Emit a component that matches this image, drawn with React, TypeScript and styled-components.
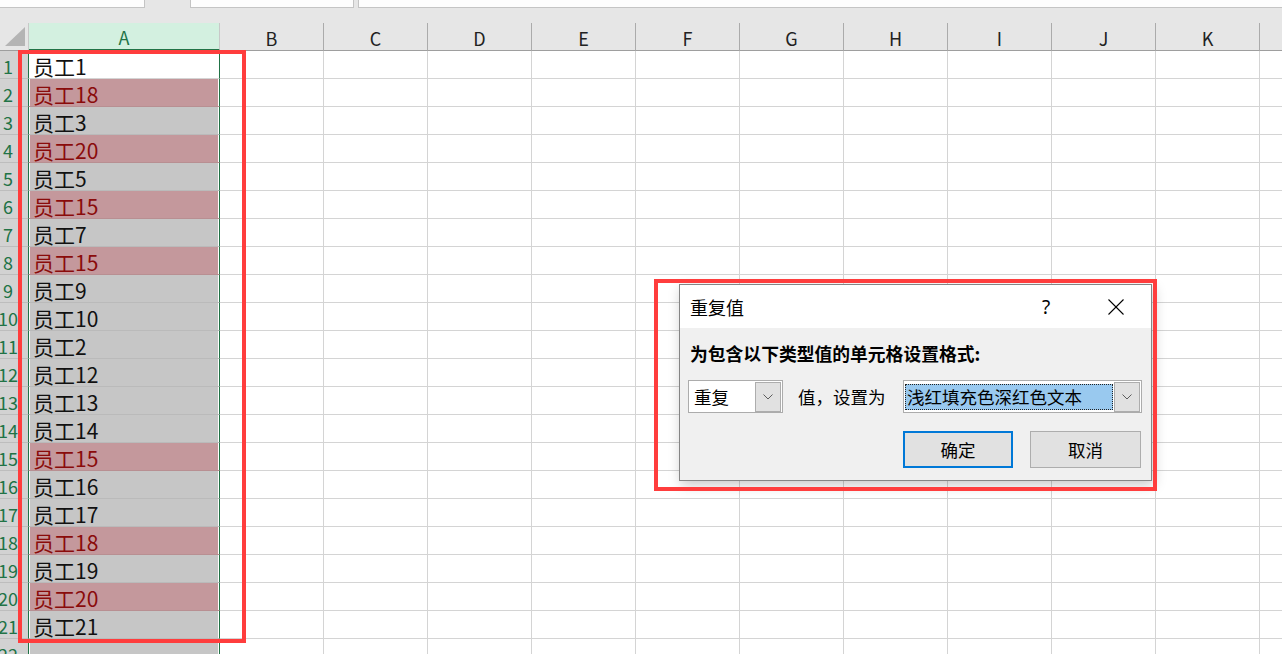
import React from 'react';
import styled, { createGlobalStyle } from 'styled-components';

const GlobalStyle = createGlobalStyle`
  html, body { margin: 0; padding: 0; background: #fff; overflow: hidden; }
  body { font-family: "Noto Sans CJK SC", "Noto Sans", sans-serif; }
  * { box-sizing: border-box; }
`;

const Screen = styled.div`
  position: relative;
  width: 1282px;
  height: 654px;
  overflow: hidden;
  background: #e6e6e6;
  font-family: "Noto Sans CJK SC", "Noto Sans", sans-serif;
`;

const FormulaStrip = styled.div`
  display: flex;
  align-items: flex-start;
  height: 23px;
  background: #e6e6e6;
`;

const StripBox = styled.div<{ $w: number; $ml: number }>`
  flex-shrink: 0;
  width: ${(p) => p.$w}px;
  margin-left: ${(p) => p.$ml}px;
  height: 8px;
  background: #fdfdfd;
  border: 1px solid #c4c4c4;
  border-top: none;
`;

const HeaderRow = styled.div`
  display: flex;
  height: 28px;
  width: max-content;
`;

const Corner = styled.div`
  position: relative;
  flex-shrink: 0;
  width: 29px;
  height: 28px;
  background: #e6e6e6;
  border-right: 1px solid #c8c8c8;
  border-bottom: 1px solid #9e9e9e;
`;

const CornerTriangle = styled.div`
  position: absolute;
  right: 3px;
  bottom: 4px;
  width: 0;
  height: 0;
  border-left: 20px solid transparent;
  border-bottom: 19px solid #b4b4b4;
`;

const ColHeader = styled.div<{ $w: number; $active?: boolean }>`
  flex-shrink: 0;
  width: ${(p) => p.$w}px;
  height: 28px;
  display: flex;
  align-items: center;
  justify-content: center;
  padding-top: 2px;
  font-size: 18px;
  color: ${(p) => (p.$active ? '#217346' : '#222')};
  background: ${(p) => (p.$active ? '#d3f0e0' : '#e6e6e6')};
  border-right: 1px solid ${(p) => (p.$active ? '#c8c8c8' : '#ababab')};
  border-bottom: ${(p) => (p.$active ? '2px solid #217346' : '1px solid #9e9e9e')};
`;

const Row = styled.div`
  display: flex;
  height: 28px;
  width: max-content;
`;

const RowHeader = styled.div`
  flex-shrink: 0;
  width: 28px;
  height: 28px;
  display: flex;
  align-items: center;
  justify-content: center;
  padding-right: 12px;
  padding-top: 2px;
  font-size: 18px;
  color: #217346;
  background: #d2d2d2;
  border-bottom: 1px solid #bdbdbd;
  white-space: nowrap;
  overflow: visible;
`;

type CellKind = 'active' | 'selected' | 'dup';

const CellA = styled.div<{ $kind: CellKind }>`
  flex-shrink: 0;
  width: 192px;
  height: 28px;
  display: flex;
  align-items: center;
  padding-left: 4px;
  padding-top: 2px;
  font-size: 21px;
  white-space: nowrap;
  color: ${(p) => (p.$kind === 'dup' ? '#8a0b0b' : '#111')};
  background: ${(p) =>
    p.$kind === 'active' ? '#ffffff' : p.$kind === 'dup' ? '#c4989c' : '#c6c6c6'};
  border-left: 1px solid #217346;
  border-right: 1px solid #217346;
  border-bottom: 1px solid
    ${(p) => (p.$kind === 'active' ? '#d4d4d4' : 'rgba(0,0,0,0.06)')};
  box-shadow: inset 1px 0 0 #fff, inset -1px 0 0 #fff;
`;

const Cell = styled.div`
  flex-shrink: 0;
  width: 104px;
  height: 28px;
  background: #fff;
  border-right: 1px solid #d4d4d4;
  border-bottom: 1px solid #d4d4d4;
`;

const Annotation = styled.div<{ $l: number; $t: number; $w: number; $h: number }>`
  position: absolute;
  left: ${(p) => p.$l}px;
  top: ${(p) => p.$t}px;
  width: ${(p) => p.$w}px;
  height: ${(p) => p.$h}px;
  border: 4px solid #ff3d3d;
  pointer-events: none;
`;

/* ---------- dialog ---------- */

const Dialog = styled.div`
  position: absolute;
  left: 679px;
  top: 284px;
  width: 473px;
  height: 197px;
  display: flex;
  flex-direction: column;
  background: #f0f0f0;
  border: 1px solid #858585;
  box-shadow: 2px 4px 12px rgba(0, 0, 0, 0.22);
  color: #000;
  font-family: "Noto Sans CJK SC", "Noto Sans", sans-serif;
  font-size: 17.5px;
`;

const TitleBar = styled.div`
  flex-shrink: 0;
  height: 43px;
  display: flex;
  align-items: center;
  padding: 0 12px 0 10px;
  background: #fff;
`;

const Title = styled.span`
  flex: 1;
  font-size: 18px;
`;

const HelpMark = styled.span`
  width: 30px;
  text-align: center;
  font-size: 19px;
  margin-right: 32px;
  font-family: "Noto Sans", "Noto Sans CJK SC", sans-serif;
`;

const CloseButton = styled.div`
  width: 46px;
  height: 30px;
  display: flex;
  align-items: center;
  justify-content: center;
`;

const Body = styled.div`
  flex: 1;
  display: flex;
  flex-direction: column;
  padding: 13px 9px 0 8px;
`;

const Label = styled.div`
  height: 24px;
  line-height: 24px;
  padding-left: 2px;
  font-weight: 700;
  font-size: 17.8px;
  white-space: nowrap;
`;

const ComboRow = styled.div`
  margin-top: 15px;
  height: 33px;
  display: flex;
  align-items: center;
`;

const Combo = styled.div<{ $w: number }>`
  flex-shrink: 0;
  width: ${(p) => p.$w}px;
  height: 33px;
  display: flex;
  align-items: center;
  background: #fff;
  border: 1px solid #acacac;
  padding: 0 1px;
`;

const ComboText = styled.div`
  flex: 1;
  padding-left: 4px;
  white-space: nowrap;
`;

const ComboSelected = styled.div`
  flex: 1;
  height: 26px;
  display: flex;
  align-items: center;
  padding-left: 2px;
  margin-right: 1px;
  background: #99c9ef;
  outline: 1px dotted #222;
  outline-offset: -1px;
  white-space: nowrap;
`;

const DropButton = styled.div`
  flex-shrink: 0;
  width: 26px;
  height: 30px;
  display: flex;
  align-items: center;
  justify-content: center;
  background: #e1e1e1;
  border: 1px solid #adadad;
`;

const InlineText = styled.span`
  margin-left: 15px;
  white-space: nowrap;
`;

const RightCombo = styled(Combo)`
  margin-left: auto;
`;

const ButtonRow = styled.div`
  margin-top: 18px;
  display: flex;
  justify-content: flex-end;
  gap: 17px;
  padding-right: 1px;
`;

const DialogButton = styled.div<{ $primary?: boolean }>`
  width: ${(p) => (p.$primary ? 110 : 111)}px;
  height: 37px;
  display: flex;
  align-items: center;
  justify-content: center;
  background: #e1e1e1;
  border: ${(p) => (p.$primary ? '2px solid #0078d7' : '1px solid #adadad')};
`;

const Chevron = () => (
  <svg width="10" height="6" viewBox="0 0 10 6">
    <polyline points="0.5,0.5 5,5 9.5,0.5" fill="none" stroke="#5c5c5c" strokeWidth="1" />
  </svg>
);

const CloseIcon = () => (
  <svg width="16" height="16" viewBox="0 0 16 16">
    <line x1="0.5" y1="0.5" x2="15.5" y2="15.5" stroke="#000" strokeWidth="1.1" />
    <line x1="15.5" y1="0.5" x2="0.5" y2="15.5" stroke="#000" strokeWidth="1.1" />
  </svg>
);

const columns = ['B', 'C', 'D', 'E', 'F', 'G', 'H', 'I', 'J', 'K', 'L'];

const names = [
  '员工1', '员工18', '员工3', '员工20', '员工5', '员工15', '员工7', '员工15', '员工9',
  '员工10', '员工2', '员工12', '员工13', '员工14', '员工15', '员工16', '员工17',
  '员工18', '员工19', '员工20', '员工21', '',
];

const dupRows = new Set([2, 4, 6, 8, 15, 18, 20]);

export default function App() {
  return (
    <Screen>
      <GlobalStyle />
      <FormulaStrip>
        <StripBox $w={146} $ml={-1} />
        <StripBox $w={164} $ml={45} />
        <StripBox $w={940} $ml={4} />
      </FormulaStrip>

      <HeaderRow>
        <Corner>
          <CornerTriangle />
        </Corner>
        <ColHeader $w={191} $active>
          A
        </ColHeader>
        {columns.map((c) => (
          <ColHeader key={c} $w={104}>
            {c}
          </ColHeader>
        ))}
      </HeaderRow>

      {names.map((name, i) => {
        const n = i + 1;
        const kind: CellKind = n === 1 ? 'active' : dupRows.has(n) ? 'dup' : 'selected';
        return (
          <Row key={n}>
            <RowHeader>{n}</RowHeader>
            <CellA $kind={kind}>{name}</CellA>
            {columns.map((c) => (
              <Cell key={c} />
            ))}
          </Row>
        );
      })}

      <Dialog>
        <TitleBar>
          <Title>重复值</Title>
          <HelpMark>?</HelpMark>
          <CloseButton>
            <CloseIcon />
          </CloseButton>
        </TitleBar>
        <Body>
          <Label>为包含以下类型值的单元格设置格式:</Label>
          <ComboRow>
            <Combo $w={95}>
              <ComboText>重复</ComboText>
              <DropButton>
                <Chevron />
              </DropButton>
            </Combo>
            <InlineText>值，设置为</InlineText>
            <RightCombo $w={239}>
              <ComboSelected>浅红填充色深红色文本</ComboSelected>
              <DropButton>
                <Chevron />
              </DropButton>
            </RightCombo>
          </ComboRow>
          <ButtonRow>
            <DialogButton $primary>确定</DialogButton>
            <DialogButton>取消</DialogButton>
          </ButtonRow>
        </Body>
      </Dialog>

      <Annotation $l={18} $t={50} $w={228} $h={593} />
      <Annotation $l={654} $t={279} $w={503} $h={212} />
    </Screen>
  );
}
